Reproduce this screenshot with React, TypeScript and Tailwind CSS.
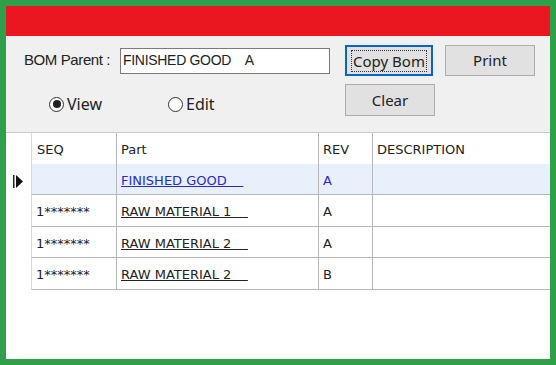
import React from "react";

interface BomRow {
  seq: string;
  part: string;
  rev: string;
  description: string;
  current?: boolean;
  height: string;
}

const ROWS: BomRow[] = [
  { seq: "", part: "FINISHED GOOD", rev: "A", description: "", current: true, height: "h-[31px]" },
  { seq: "1*******", part: "RAW MATERIAL 1", rev: "A", description: "", height: "h-[32px]" },
  { seq: "1*******", part: "RAW MATERIAL 2", rev: "A", description: "", height: "h-[31px]" },
  { seq: "1*******", part: "RAW MATERIAL 2", rev: "B", description: "", height: "h-[32px]" },
];

const gridFont = { fontFamily: '"DejaVu Sans", Verdana, sans-serif' };
const uiFont = { fontFamily: '"Noto Sans", "Open Sans", sans-serif' };
const formFont = { fontFamily: '"Liberation Sans", Arial, sans-serif' };

const RowArrow: React.FC = () => (
  <svg width="12" height="13" viewBox="0 0 12 13" className="ml-[7px] mt-[3px]">
    <rect x="0" y="0" width="1.5" height="13" fill="#222" />
    <polygon points="3,0 10,6.5 3,13" fill="#111" />
  </svg>
);

const Radio: React.FC<{ checked?: boolean; label: string }> = ({ checked, label }) => (
  <label className="flex items-center gap-[3px] text-[16px] text-[#222]" style={uiFont}>
    <span className="w-[15px] h-[15px] rounded-full border border-[#333] bg-white flex items-center justify-center">
      {checked ? <span className="w-[8px] h-[8px] rounded-full bg-[#222]" /> : null}
    </span>
    {label}
  </label>
);

const App: React.FC = () => {
  return (
    <div className="w-[556px] h-[365px] bg-[#2fa04a] p-[6px]">
      <div className="w-full h-full flex flex-col bg-white overflow-hidden">
        <div className="h-[30px] bg-[#ea1620] shrink-0" />

        <div className="h-[97px] bg-[#f0f0f0] shrink-0 border-b border-[#c8c8c8] pl-[18px] pt-[9px]">
          <div className="flex items-center h-[31px]">
            <span className="text-[15px] text-[#222] w-[96px] tracking-[-0.4px]" style={formFont}>
              BOM Parent :
            </span>
            <div
              className="w-[210px] h-[26px] bg-white border border-[#7a7a7a] flex items-center pl-[2px] text-[14px] text-[#222] whitespace-pre tracking-[-0.3px]"
              style={formFont}
            >
              FINISHED GOOD    A
            </div>
            <button
              className="ml-[15px] w-[88px] h-[31px] bg-[#e1e1e1] border-2 border-[#0a64c8] text-[15px] text-[#222] flex items-center justify-center"
              style={uiFont}
            >
              <span className="px-[1px] leading-[20px] border border-dotted border-[#333]">Copy Bom</span>
            </button>
            <button
              className="ml-[12px] w-[90px] h-[31px] bg-[#e1e1e1] border border-[#adadad] text-[15px] text-[#222]"
              style={uiFont}
            >
              Print
            </button>
          </div>

          <div className="flex items-center h-[32px] mt-[8px]">
            <div className="flex items-center w-[321px] pl-[25px] pt-[8px]">
              <div className="w-[119px]">
                <Radio checked label="View" />
              </div>
              <Radio label="Edit" />
            </div>
            <button
              className="w-[90px] h-[32px] bg-[#e1e1e1] border border-[#adadad] text-[15px] text-[#222]"
              style={uiFont}
            >
              Clear
            </button>
          </div>
        </div>

        <div className="flex-1 bg-white text-[13px] text-[#222]" style={gridFont}>
          <div className="flex h-[31px]">
            <div className="w-[25px] shrink-0" />
            <div className="w-[85px] shrink-0 border-l border-[#d8d8d8] pl-[5px] pt-[3px] flex items-center">SEQ</div>
            <div className="w-[202px] shrink-0 border-l border-[#b8b8b8] pl-[4px] pt-[3px] flex items-center">Part</div>
            <div className="w-[54px] shrink-0 border-l border-[#b8b8b8] pl-[4px] pt-[3px] flex items-center">REV</div>
            <div className="flex-1 border-l border-[#b8b8b8] pl-[4px] pt-[3px] flex items-center">DESCRIPTION</div>
          </div>

          {ROWS.map((row, index) => (
            <div key={index} className={`flex ${row.height}`}>
              <div className="w-[25px] shrink-0 flex items-center">{row.current ? <RowArrow /> : null}</div>
              <div
                className={`flex flex-1 border-b border-[#b8b8b8] border-l border-l-[#d8d8d8] ${
                  row.current ? "bg-[#e8f0fb]" : "bg-white"
                }`}
              >
                <div className="w-[84px] shrink-0 pl-[4px] pt-[3px] flex items-center">{row.seq}</div>
                <div className="w-[202px] shrink-0 border-l border-[#b8b8b8] pl-[4px] pt-[3px] flex items-center">
                  <span
                    className={`underline whitespace-pre ${row.current ? "text-[#2a2ad0]" : "text-[#222]"}`}
                  >
                    {row.part + "    "}
                  </span>
                </div>
                <div
                  className={`w-[54px] shrink-0 border-l border-[#b8b8b8] pl-[4px] pt-[3px] flex items-center ${
                    row.current ? "text-[#2a2ad0]" : ""
                  }`}
                >
                  {row.rev}
                </div>
                <div className="flex-1 border-l border-[#b8b8b8] pl-[4px] flex items-center">{row.description}</div>
              </div>
            </div>
          ))}
        </div>
      </div>
    </div>
  );
};

export default App;
